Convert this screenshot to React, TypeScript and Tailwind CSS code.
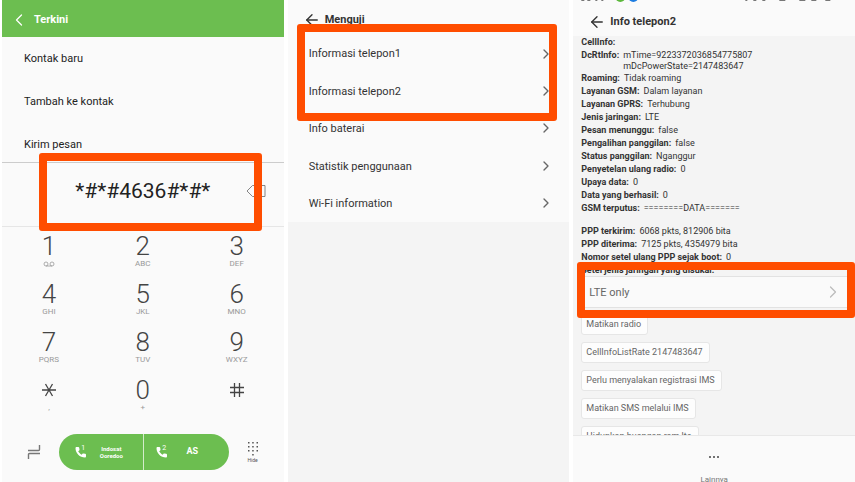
import React from 'react';
import { ArrowLeft, ChevronLeft, ChevronRight } from 'lucide-react';

const contactActions = ['Kontak baru', 'Tambah ke kontak', 'Kirim pesan'];

const keys = [
  { digit: '1', letters: 'voicemail' },
  { digit: '2', letters: 'ABC' },
  { digit: '3', letters: 'DEF' },
  { digit: '4', letters: 'GHI' },
  { digit: '5', letters: 'JKL' },
  { digit: '6', letters: 'MNO' },
  { digit: '7', letters: 'PQRS' },
  { digit: '8', letters: 'TUV' },
  { digit: '9', letters: 'WXYZ' },
  { digit: '*', letters: ',' },
  { digit: '0', letters: '+' },
  { digit: '#', letters: '' },
];

const testMenu = [
  'Informasi telepon1',
  'Informasi telepon2',
  'Info baterai',
  'Statistik penggunaan',
  'Wi-Fi information',
];

const radioInfo = [
  { label: 'Roaming:', value: 'Tidak roaming' },
  { label: 'Layanan GSM:', value: 'Dalam layanan' },
  { label: 'Layanan GPRS:', value: 'Terhubung' },
  { label: 'Jenis jaringan:', value: 'LTE' },
  { label: 'Pesan menunggu:', value: 'false' },
  { label: 'Pengalihan panggilan:', value: 'false' },
  { label: 'Status panggilan:', value: 'Nganggur' },
  { label: 'Penyetelan ulang radio:', value: '0' },
  { label: 'Upaya data:', value: '0' },
  { label: 'Data yang berhasil:', value: '0' },
  { label: 'GSM terputus:', value: '========DATA=======' },
];

const pppInfo = [
  { label: 'PPP terkirim:', value: '6068 pkts, 812906 bita' },
  { label: 'PPP diterima:', value: '7125 pkts, 4354979 bita' },
  { label: 'Nomor setel ulang PPP sejak boot:', value: '0' },
];

const radioActions = [
  'Matikan radio',
  'CellInfoListRate 2147483647',
  'Perlu menyalakan registrasi IMS',
  'Matikan SMS melalui IMS',
  'Hidupkan buangan ram lte',
];

const Highlight: React.FC<{ className: string }> = ({ className }) => (
  <div className={`absolute z-10 pointer-events-none rounded-[3px] border-8 border-[#ff4d00] ${className}`}></div>
);

const InfoLine: React.FC<{ label: string; value: string }> = ({ label, value }) => (
  <p className="flex gap-1">
    <b>{label}</b>
    <span>{value}</span>
  </p>
);

const SimIcon: React.FC<{ sim: string }> = ({ sim }) => (
  <span className="relative w-3 h-3 shrink-0">
    <svg viewBox="0 0 24 24" className="w-3 h-3" fill="currentColor">
      <path d="M3 2c-1 0-2 1-2 2 0 10.500 8.500 19 19 19 1 0 2-1 2-2v-3.500c0-1-.8-1.600-1.600-1.800l-3.600-.7c-.7-.1-1.400.1-1.800.6l-1.800 2C10 15.500 7.800 13.300 6.400 10.600l2-1.800c.5-.5.7-1.200.6-1.900L8.400 3.600C8.200 2.700 7.600 2 6.600 2z" />
    </svg>
    <span className="absolute -top-[2px] left-[6px] text-[7px] leading-[8px]">{sim}</span>
  </span>
);

// extra caption under a digit, key 1 shows the voicemail sign instead of letters
const KeyCaption: React.FC<{ letters: string }> = ({ letters }) => {
  if (letters !== 'voicemail') {
    return <span className="h-3 text-[8px] leading-[12px] text-[#999999]">{letters}</span>;
  }
  return (
    <svg viewBox="0 0 12 6" className="w-3 h-3" fill="none" stroke="#999999" strokeWidth="0.8">
      <circle cx="3" cy="3" r="2" />
      <circle cx="9" cy="3" r="2" />
      <path d="M3 5h6" />
    </svg>
  );
};

const KeySymbol: React.FC<{ digit: string }> = ({ digit }) => {
  if (digit === '*') {
    return (
      <svg viewBox="0 0 16 24" className="w-4 h-6" fill="none" stroke="#444444" strokeWidth="1.3">
        <path d="M1 12h14M4.500 6l7 12M11.500 6l-7 12" />
      </svg>
    );
  }
  if (digit === '#') {
    return (
      <svg viewBox="0 0 16 24" className="w-4 h-6" fill="none" stroke="#444444" strokeWidth="1.3">
        <path d="M1 9.500h14M1 14.500h14M5.500 5v14M10.500 5v14" />
      </svg>
    );
  }
  return <span className="text-[26px] leading-6 font-light text-[#444444]">{digit}</span>;
};

const Dialer: React.FC = () => (
  <section className="bg-[#fafafa]">
    <header className="h-[37px] flex items-center gap-[5px] pt-[3px] px-[7px] bg-[#6cbe50] text-white">
      <button aria-label="Kembali">
        <ChevronLeft className="w-5 h-5" strokeWidth={1.5} />
      </button>
      <h1 className="text-[11px] leading-4 font-bold">Terkini</h1>
    </header>

    <ul className="flex flex-col gap-[23px] pt-3 pb-[7px] pl-[22px] text-[11px] leading-5 text-[#222222]">
      {contactActions.map((action) => (
        <li key={action}>
          <button>{action}</button>
        </li>
      ))}
    </ul>

    <div className="relative h-[65px] flex items-center pb-2 border-t border-b border-t-[#cccccc] border-b-[#e6e6e6]">
      <input
        aria-label="Nomor"
        defaultValue="*#*#4636#*#*"
        className="w-full bg-transparent text-center text-[21px] leading-6 text-[#222222] outline-none"
      />
      <button aria-label="Hapus" className="absolute right-[18px]">
        <svg viewBox="0 0 20 14" className="w-5 h-[14px]" fill="none" stroke="#777777" strokeWidth="0.9">
          <path d="M1 7l5.500-5.500H19v11H6.500z" />
        </svg>
      </button>
      <Highlight className="left-[37px] right-[22px] -top-[10px] -bottom-[5px]" />
    </div>

    <div className="grid grid-cols-3 gap-y-3 pt-[7px]">
      {keys.map((key) => (
        <button key={key.digit} className="flex flex-col items-center">
          <KeySymbol digit={key.digit} />
          <KeyCaption letters={key.letters} />
        </button>
      ))}
    </div>

    <div className="flex items-center justify-between pl-6 pr-[25px] pt-5">
      <button aria-label="Alihkan" className="text-[#777777]">
        <svg viewBox="0 0 16 18" className="w-4 h-[18px]" fill="none" stroke="currentColor" strokeWidth="1.4">
          <path d="M2 7.500h10.500q1 0 1-1V2M14 10.500H3.500q-1 0-1 1V16" />
        </svg>
      </button>
      <div className="w-[170px] h-9 grid grid-cols-2 rounded-full overflow-hidden bg-[#6cbe50] text-white">
        <button className="flex items-center gap-1 pl-4 border-r border-white/70">
          <SimIcon sim="1" />
          <span className="w-10 text-center text-[6px] leading-[7px] font-bold">
            Indosat
            <br />
            Ooredoo
          </span>
        </button>
        <button className="flex items-center gap-1 pl-3">
          <SimIcon sim="2" />
          <span className="w-10 text-center text-[9px] font-bold">AS</span>
        </button>
      </div>
      <button className="flex flex-col items-center text-[5px] leading-[6px] text-[#555555]">
        <svg viewBox="0 0 12 16" className="w-3 h-4" fill="currentColor">
          <path d="M1 1h1.500v1.500H1zM5.200 1h1.500v1.500H5.200zM9.500 1H11v1.500H9.500zM1 5h1.500v1.500H1zM5.200 5h1.500v1.500H5.200zM9.500 5H11v1.500H9.500zM1 9h1.500v1.500H1zM5.200 9h1.500v1.500H5.200zM9.500 9H11v1.500H9.500zM5.200 13h1.500v1.500H5.200z" />
        </svg>
        Hide
      </button>
    </div>
  </section>
);

const TestMenu: React.FC = () => (
  <section className="bg-[#f4f4f4]">
    <div className="bg-[#fafafa]">
      <header className="h-[35px] flex items-center gap-1 pt-[5px] pl-[15px] text-[#333333]">
        <button aria-label="Kembali">
          <ArrowLeft className="w-[18px] h-[18px]" strokeWidth={1.8} />
        </button>
        <h2 className="text-[11px] leading-4 font-bold">Menguji</h2>
      </header>

      <div className="relative">
        <ul className="h-[187px] grid grid-rows-5 text-[11px] text-[#333333]">
          {testMenu.map((item) => (
            <li key={item} className="flex">
              <button className="flex-1 flex items-center justify-between pl-[21px] pr-[15px]">
                <span className="pt-[2px]">{item}</span>
                <ChevronRight className="w-4 h-4 text-[#666666]" />
              </button>
            </li>
          ))}
        </ul>
        <Highlight className="left-[9px] right-3 -top-[11px] h-[97px]" />
      </div>
    </div>
  </section>
);

const PhoneInfo: React.FC = () => (
  <section className="h-screen flex flex-col bg-[#f4f4f4] text-[#333333]">
    <header className="relative shrink-0 h-9 flex items-center gap-1 pt-2 pl-[15px] bg-[#fafafa]">
      <svg viewBox="0 0 281 3" className="absolute left-0 top-0 w-full h-[3px]" fill="#777777">
        <path d="M8 0h3v1H8zM14 0h3v1h-3zM22 0h2v1h-2zM28 0h2v1h-2zM172 0h2v1h-2zM180 0h3v1h-3zM189 0h3v1h-3zM206 0h6v1h-6zM226 0h6v1h-6zM238 0h5v1h-5zM252 0h5v1h-5z" />
        <circle cx="47" cy="-3" r="5" fill="#5cb83c" />
        <circle cx="60" cy="-3" r="5" fill="#1c7ce0" />
      </svg>
      <button aria-label="Kembali">
        <ArrowLeft className="w-[18px] h-[18px]" strokeWidth={1.8} />
      </button>
      <h2 className="text-[11px] leading-4 font-bold">Info telepon2</h2>
    </header>

    <main className="flex-1 overflow-hidden px-2 text-[9px] leading-[13px]">
      <p>
        <b>CellInfo:</b>
      </p>
      <div className="flex gap-1">
        <b>DcRtInfo:</b>
        <p className="pt-px leading-[11px]">
          mTime=9223372036854775807
          <br />
          mDcPowerState=2147483647
        </p>
      </div>
      {radioInfo.map((line) => (
        <InfoLine key={line.label} {...line} />
      ))}
      <div className="pt-[10px]">
        {pppInfo.map((line) => (
          <InfoLine key={line.label} {...line} />
        ))}
      </div>

      <div className="relative">
        <label htmlFor="network" className="block h-3 font-bold">
          Setel jenis jaringan yang disukai:
        </label>
        <select
          id="network"
          className="block w-full h-8 px-2 appearance-none border-t border-b border-[#e2e2e2] bg-[#fafafa] text-[11px] text-[#666666]"
        >
          <option>LTE only</option>
        </select>
        <ChevronRight className="absolute right-1 bottom-[6px] w-5 h-5 text-[#bbbbbb]" strokeWidth={1.5} />
        <Highlight className="-left-1 -right-2 -top-[2px] h-14" />
      </div>

      <div className="flex flex-col items-start gap-[7px] pt-[6px] text-[#666666]">
        {radioActions.map((action) => (
          <button key={action} className="h-[21px] pl-1 pr-[6px] whitespace-nowrap rounded-[3px] border border-[#e6e6e6] bg-[#fdfdfd]">
            {action}
          </button>
        ))}
      </div>
    </main>

    <footer className="shrink-0 h-[47px] flex justify-center items-start pt-[18px] border-t border-[#e8e8e8] bg-[#fafafa]">
      <button className="flex flex-col items-center gap-[13px] text-[8px] leading-[14px] text-[#777777]">
        <svg viewBox="0 0 12 6" className="w-3 h-[6px] shrink-0" fill="#444444">
          <circle cx="2" cy="3" r="1" />
          <circle cx="6" cy="3" r="1" />
          <circle cx="10" cy="3" r="1" />
        </svg>
        Lainnya
      </button>
    </footer>
  </section>
);

export default function App() {
  return (
    <div className="h-screen overflow-hidden grid grid-cols-3 gap-1 pl-[2px] bg-white font-[Roboto,sans-serif]">
      <Dialer />
      <TestMenu />
      <PhoneInfo />
    </div>
  );
}
